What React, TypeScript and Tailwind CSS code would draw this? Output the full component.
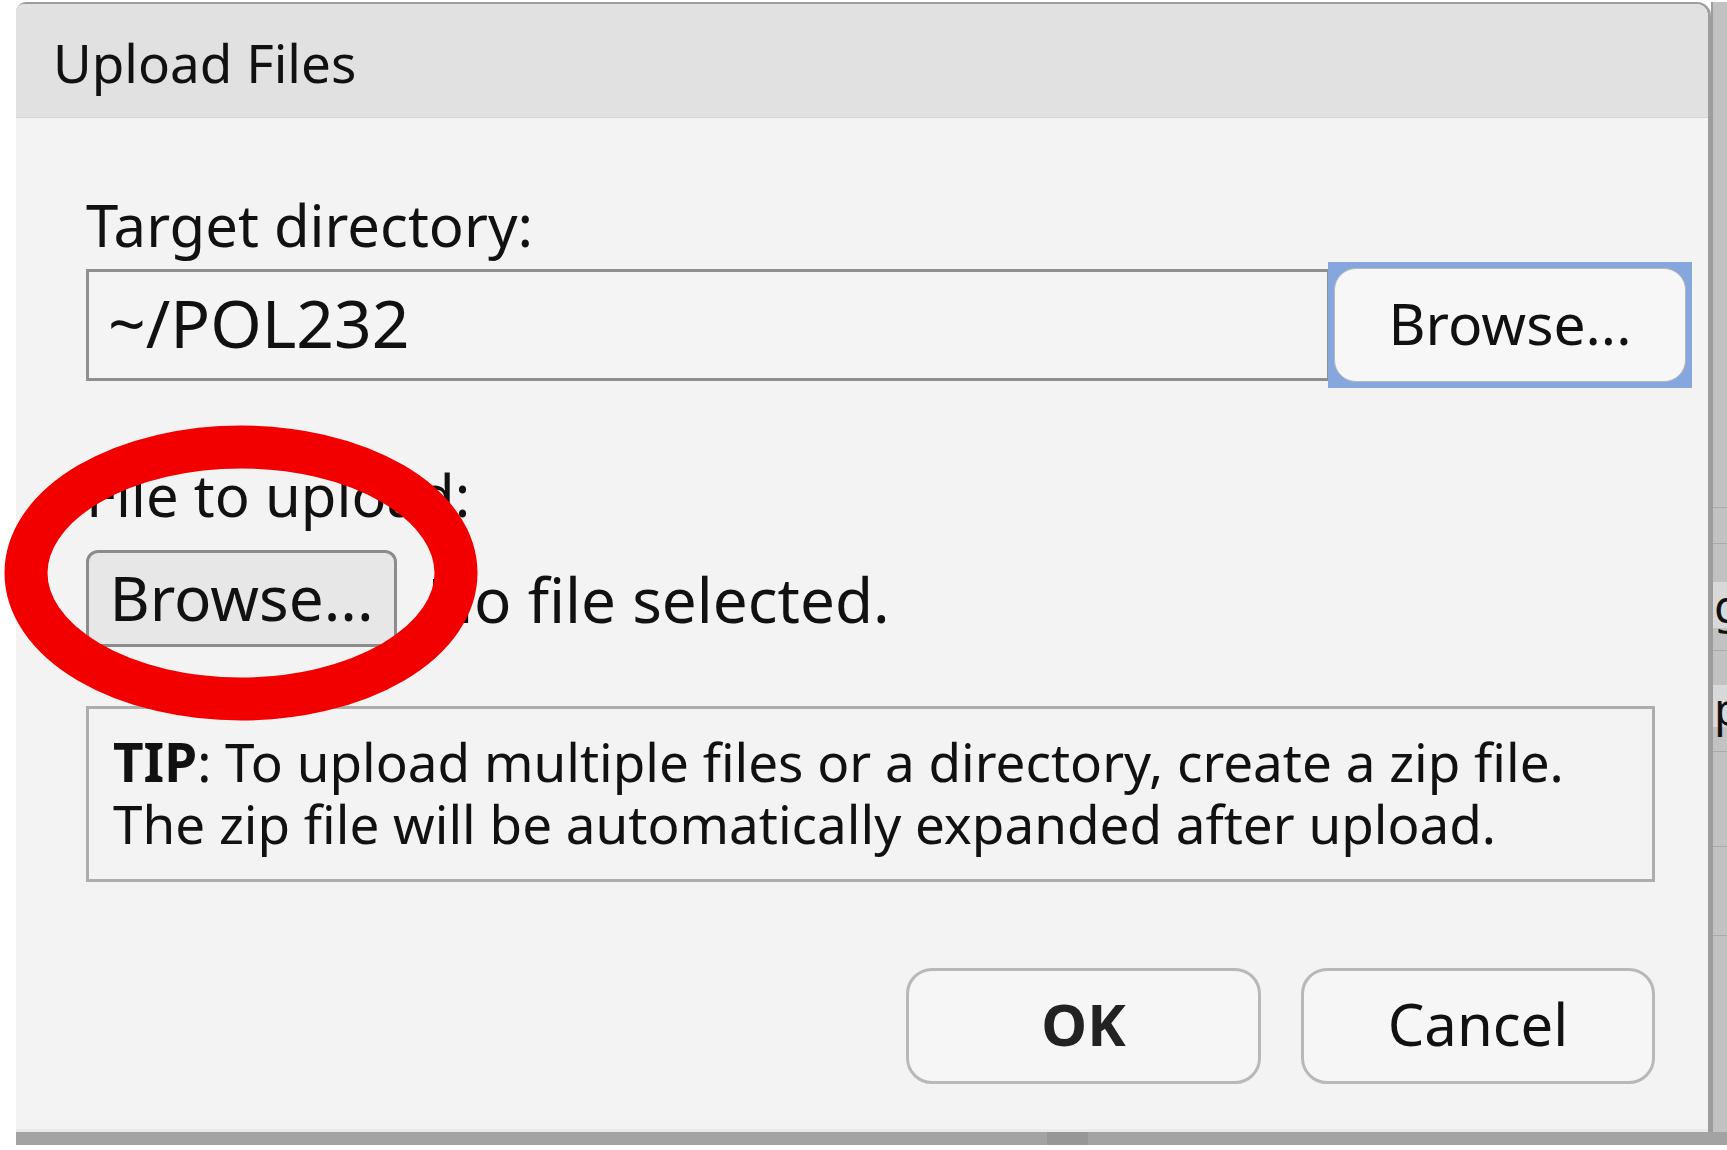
import React from "react";

const font = { fontFamily: '"Noto Sans", "DejaVu Sans", sans-serif' };

function TargetDirectory() {
  return (
    <div className="flex flex-col">
      <div className="text-[58px] leading-none text-[#111]">Target directory:</div>
      <div className="flex items-center mt-[8px]">
        <div className="w-[1244px] h-[112px] border-[3px] border-[#8f8f8f] bg-[#f4f4f4] pl-[19px] pt-[17px]">
          <span className="text-[66px] leading-none text-[#111]">~/POL232</span>
        </div>
        <div className="w-[364px] h-[126px] -ml-[2px] border-[6px] border-[#86a7dd] bg-[#86a7dd]">
          <button className="w-full h-full rounded-[22px] border border-[#b9b9b9] bg-[#f7f7f7] text-[57px] leading-none text-[#111] pb-[4px]">
            Browse...
          </button>
        </div>
      </div>
    </div>
  );
}

function FileToUpload() {
  return (
    <div className="flex flex-col mt-[78px]">
      <div className="text-[58px] leading-none text-[#111]">File to upload:</div>
      <div className="flex items-center mt-[26px]">
        <button className="w-[311px] h-[97px] rounded-[12px] border-[3px] border-[#8c8c8c] bg-[#e7e7e8] text-[62px] leading-none text-[#111] pb-[4px]">
          Browse...
        </button>
        <span className="ml-[30px] text-[62px] leading-none text-[#111]">No file selected.</span>
      </div>
    </div>
  );
}

function TipBox() {
  return (
    <div className="mt-[59px] w-[1569px] h-[176px] border-[3px] border-[#adadad] pl-[24px] pt-[22px] text-[53px] leading-[62px] text-[#111]">
      <div>
        <b>TIP</b>: To upload multiple files or a directory, create a zip file.
      </div>
      <div>The zip file will be automatically expanded after upload.</div>
    </div>
  );
}

function Buttons() {
  return (
    <div className="mt-[86px] w-[1569px] flex justify-end gap-[40px]">
      <button className="w-[355px] h-[116px] rounded-[26px] border-[3px] border-[#b8b8b8] bg-[#f6f6f6] text-[58px] font-bold leading-none text-[#222] pb-[4px]">
        OK
      </button>
      <button className="w-[354px] h-[116px] rounded-[26px] border-[3px] border-[#b8b8b8] bg-[#f6f6f6] text-[58px] leading-none text-[#111] pb-[4px]">
        Cancel
      </button>
    </div>
  );
}

function RedCircle() {
  // annotation drawn over the dialog
  return (
    <svg className="absolute left-[4px] top-[425px] pointer-events-none" width="474" height="296" viewBox="0 0 474 296">
      <ellipse cx="237" cy="148" rx="215" ry="126" fill="none" stroke="#f20000" strokeWidth="43" />
    </svg>
  );
}

function BackgroundStrip() {
  return (
    <div className="flex-1 flex flex-col bg-[#c2c2c2] border-l-[2px] border-[#9c9c9c] overflow-hidden text-[#111]">
      <div className="h-[505px]" />
      <div className="h-px bg-[#a9a9a9]" />
      <div className="h-[35px]" />
      <div className="h-px bg-[#a9a9a9]" />
      <div className="h-[38px]" />
      <div className="h-[46px] bg-[#d9d9d9] text-[46px] leading-none pl-[1px]">g</div>
      <div className="h-[22px]" />
      <div className="h-px bg-[#a9a9a9]" />
      <div className="h-[38px]" />
      <div className="h-[42px] bg-[#d9d9d9] text-[46px] leading-none pl-[1px] -mt-[4px]">p</div>
      <div className="h-[24px]" />
      <div className="h-px bg-[#a9a9a9]" />
      <div className="h-[94px]" />
      <div className="h-px bg-[#a9a9a9]" />
      <div className="h-[88px]" />
      <div className="h-px bg-[#a9a9a9]" />
    </div>
  );
}

export default function App() {
  return (
    <div className="relative w-[1727px] h-[1150px] bg-white flex flex-col overflow-hidden pt-[2px]" style={font}>
      <div className="flex h-[1130px]">
        <div className="w-[16px] shrink-0 bg-white" />
        <div className="relative w-[1695px] shrink-0 flex flex-col border-t-2 border-r-[3px] border-[#9d9d9d] rounded-tl-[10px] rounded-tr-[14px] bg-[#f3f3f3]">
          <div className="h-[114px] shrink-0 bg-[#e1e1e1] border-b border-[#d5d5d5] rounded-tl-[8px] rounded-tr-[12px] flex items-center pl-[37px] pt-[4px]">
            <span className="text-[53px] leading-none text-[#111]">Upload Files</span>
          </div>
          <div className="flex flex-col pl-[70px] pt-[78px]">
            <TargetDirectory />
            <FileToUpload />
            <TipBox />
            <Buttons />
          </div>
          <div className="flex-1" />
          <div className="h-[3px] bg-[#e9e9e9]" />
        </div>
        <BackgroundStrip />
      </div>
      <div className="ml-[16px] h-[13px] bg-[#a3a3a3] flex">
        <div className="ml-[1031px] w-[41px] bg-[#979797]" />
      </div>
      <div className="flex-1 bg-white" />
      <RedCircle />
    </div>
  );
}
